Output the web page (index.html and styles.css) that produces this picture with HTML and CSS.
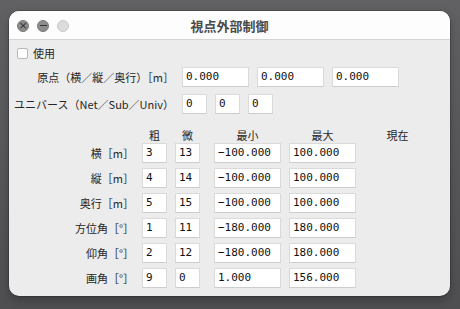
FILE: index.html
```html
<!DOCTYPE html>
<html lang="ja">
<head>
  <meta charset="UTF-8">
  <title>視点外部制御</title>
  <link rel="stylesheet" href="styles.css">
</head>
<body>
  <div class="window">
    <div class="titlebar">
      <div class="lights">
        <span class="light close">×</span>
        <span class="light mini"></span>
        <span class="light zoom"></span>
      </div>
      <div class="title">視点外部制御</div>
      <div></div>
    </div>

    <div class="content">
      <label class="check"><span class="box"></span>使用</label>

      <div class="top">
        <div class="lbl">原点（横／縦／奥行）［m］</div>
        <div class="fields">
          <span class="field wide">0.000</span>
          <span class="field wide">0.000</span>
          <span class="field wide">0.000</span>
        </div>
        <div class="lbl">ユニバース（Net／Sub／Univ）</div>
        <div class="fields">
          <span class="field">0</span>
          <span class="field">0</span>
          <span class="field">0</span>
        </div>
      </div>

      <div class="grid head">
        <div></div>
        <div>粗</div>
        <div class="fine">微</div>
        <div>最小</div>
        <div>最大</div>
        <div>現在</div>
      </div>

      <div class="grid body">
        <div class="lbl">横［m］</div>
        <span class="field">3</span><span class="field fine">13</span>
        <span class="field wide">−100.000</span><span class="field wide">100.000</span><div></div>

        <div class="lbl">縦［m］</div>
        <span class="field">4</span><span class="field fine">14</span>
        <span class="field wide">−100.000</span><span class="field wide">100.000</span><div></div>

        <div class="lbl">奥行［m］</div>
        <span class="field">5</span><span class="field fine">15</span>
        <span class="field wide">−100.000</span><span class="field wide">100.000</span><div></div>

        <div class="lbl">方位角［°］</div>
        <span class="field">1</span><span class="field fine">11</span>
        <span class="field wide">−180.000</span><span class="field wide">180.000</span><div></div>

        <div class="lbl">仰角［°］</div>
        <span class="field">2</span><span class="field fine">12</span>
        <span class="field wide">−180.000</span><span class="field wide">180.000</span><div></div>

        <div class="lbl">画角［°］</div>
        <span class="field">9</span><span class="field fine">0</span>
        <span class="field wide">1.000</span><span class="field wide">156.000</span><div></div>
      </div>
    </div>
  </div>
</body>
</html>
```

FILE: styles.css
```css
*{
  margin:0;
  padding:0;
  box-sizing: border-box;
}
body {
  width: 460px;
  height: 309px;
  overflow: hidden;
  background: linear-gradient(to bottom, #616164, #4f4f52);
  font-family: "Noto Sans CJK JP", "Noto Sans", sans-serif;
  font-size: 11px;
  color: #262626;
}
.window{
  margin: 11px 0 0 9px;
  width: 441px;
  height: 285px;
  border-radius: 10px;
  overflow: hidden;
  background: #ececec;
  box-shadow: 0 0 0 0.5px rgba(0,0,0,.35), 0 4px 10px rgba(0,0,0,.25);
}
.titlebar{
  height: 29px;
  background: #fdfdfd;
  border-bottom: 1px solid #d4d4d4;
  display: grid;
  grid-template-columns: 1fr auto 1fr;
  align-items: center;
}
.lights{
  display: flex;
  gap: 8px;
  padding-left: 8px;
  padding-top: 1px;
}
.light{
  width: 12px;
  height: 12px;
  border-radius: 50%;
  background: #8d8d8d;
  border: 0.5px solid #7a7a7a;
  display: flex;
  align-items: center;
  justify-content: center;
  color: #333;
  font-family: "DejaVu Sans", sans-serif;
  font-size: 11px;
  line-height: 1;
}
.close{
  padding-bottom: 1px;
}
.mini::before{
  content: "";
  width: 7px;
  height: 1.5px;
  background: #333;
}
.zoom{
  background: #dcdcdc;
  border-color: #c9c9c9;
}
.title{
  font-size: 13px;
  font-weight: bold;
  color: #4b4b4b;
  padding-top: 1px;
}
.content{
  padding-top: 6px;
}
.check{
  display: flex;
  align-items: center;
  gap: 5px;
  height: 14px;
  padding-left: 8px;
}
.box{
  width: 11px;
  height: 11px;
  background: #fff;
  border: 1px solid #b8b8b8;
  border-radius: 2px;
}
.top{
  display: grid;
  grid-template-columns: 165px auto;
  column-gap: 8px;
  row-gap: 7px;
  margin-top: 7px;
  align-items: center;
}
.lbl{
  text-align: right;
  white-space: nowrap;
}
.fields{
  display: flex;
  gap: 8px;
}
.field{
  display: block;
  width: 25px;
  height: 20px;
  background: #fff;
  border: 1px solid #dadada;
  border-bottom-color: #cdcdcd;
  font-family: "DejaVu Sans Mono", monospace;
  font-size: 11px;
  line-height: 18px;
  padding-left: 3px;
  color: #111;
  white-space: nowrap;
}
.field.wide{
  width: 67px;
}
.grid{
  display: grid;
  grid-template-columns: 125px 25px 31px 67px 67px 67px;
  column-gap: 8px;
  align-items: center;
}
.grid .fine{
  width: 25px;
}
.head{
  margin-top: 13px;
  height: 14px;
  text-align: center;
}
.body{
  margin-top: 2px;
  row-gap: 5px;
}
```
